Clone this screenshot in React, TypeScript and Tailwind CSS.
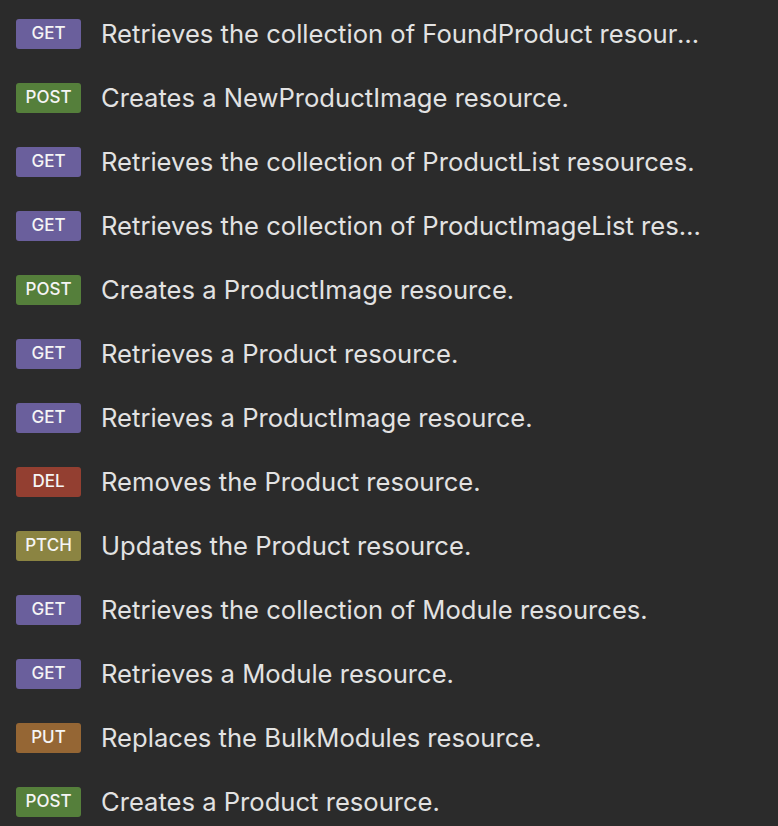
import React from "react";

type Method = "GET" | "POST" | "DEL" | "PTCH" | "PUT";

const badgeClass: Record<Method, string> = {
  GET: "bg-[#6a5f9c]",
  POST: "bg-[#557f3b]",
  DEL: "bg-[#933f31]",
  PTCH: "bg-[#8b8442]",
  PUT: "bg-[#956634]",
};

const rows: [Method, string][] = [
  ["GET", "Retrieves the collection of FoundProduct resources."],
  ["POST", "Creates a NewProductImage resource."],
  ["GET", "Retrieves the collection of ProductList resources."],
  ["GET", "Retrieves the collection of ProductImageList resources."],
  ["POST", "Creates a ProductImage resource."],
  ["GET", "Retrieves a Product resource."],
  ["GET", "Retrieves a ProductImage resource."],
  ["DEL", "Removes the Product resource."],
  ["PTCH", "Updates the Product resource."],
  ["GET", "Retrieves the collection of Module resources."],
  ["GET", "Retrieves a Module resource."],
  ["PUT", "Replaces the BulkModules resource."],
  ["POST", "Creates a Product resource."],
];

export default function App() {
  return (
    <div
      className="w-[778px] h-[826px] overflow-hidden bg-[#2b2b2b] pt-[2px]"
      style={{ fontFamily: "Inter, 'Noto Sans', sans-serif" }}
    >
      {rows.map(([m, t], i) => (
        <div key={i} className="h-[64px] flex items-center pl-[16px]">
          <div
            className={`${badgeClass[m]} w-[65px] h-[30px] rounded-[3px] flex items-center justify-center text-[17px] font-medium text-[#f5f5f5] shrink-0`}
          >
            {m}
          </div>
          <div className="ml-[20px] w-[602px] truncate text-[25.6px] text-[#e2e2e2]">
            {t}
          </div>
        </div>
      ))}
    </div>
  );
}
